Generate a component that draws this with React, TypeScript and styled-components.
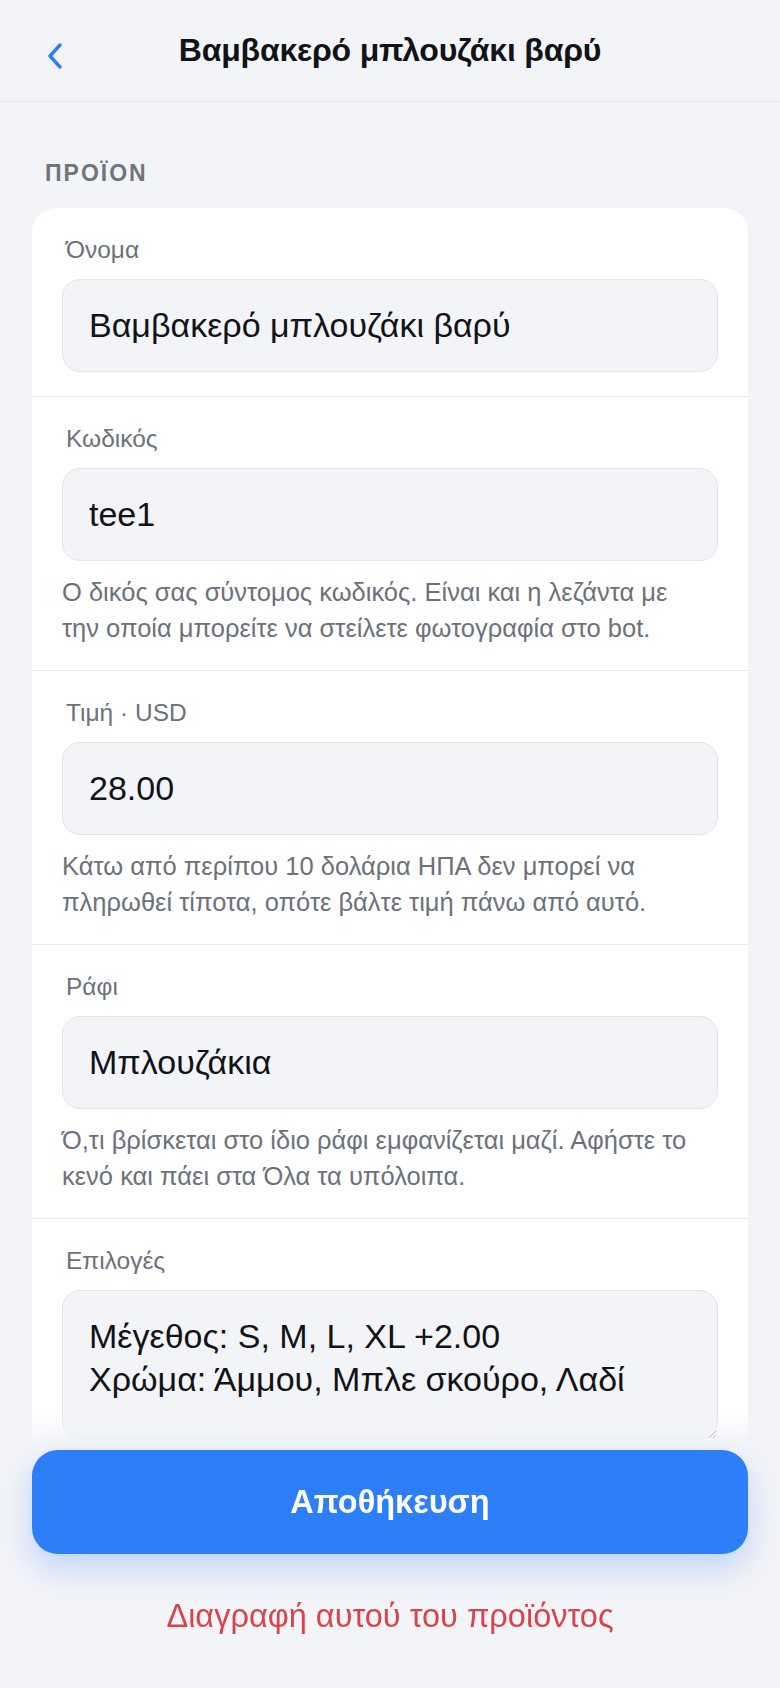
import styled, { createGlobalStyle } from "styled-components";

const GlobalStyle = createGlobalStyle`
    * {
        box-sizing: border-box;
    }

    body {
        margin: 0;
        background-color: #f3f4f8;
        font-family: "Liberation Sans", Arial, sans-serif;
        color: #111318;
    }
`;

type Field = {
    label: string;
    value: string;
    hint?: string;
    multiline?: boolean;
};

// "την\u00a0οποία" is kept together so the line breaks where it does on the device
const fields: Field[] = [
    { label: "Όνομα", value: "Βαμβακερό μπλουζάκι βαρύ" },
    {
        label: "Κωδικός",
        value: "tee1",
        hint: "Ο δικός σας σύντομος κωδικός. Είναι και η λεζάντα με την\u00a0οποία μπορείτε να στείλετε φωτογραφία στο bot.",
    },
    {
        label: "Τιμή · USD",
        value: "28.00",
        hint: "Κάτω από περίπου 10 δολάρια ΗΠΑ δεν μπορεί να πληρωθεί τίποτα, οπότε βάλτε τιμή πάνω από αυτό.",
    },
    {
        label: "Ράφι",
        value: "Μπλουζάκια",
        hint: "Ό,τι βρίσκεται στο ίδιο ράφι εμφανίζεται μαζί. Αφήστε το κενό και πάει στα Όλα τα υπόλοιπα.",
    },
    {
        label: "Επιλογές",
        value: "Μέγεθος: S, M, L, XL +2.00\nΧρώμα: Άμμου, Μπλε σκούρο, Λαδί",
        multiline: true,
    },
];

function App() {
    return (
        <>
            <GlobalStyle />
            <Header>
                <BackButton aria-label="Πίσω">
                    <svg width="18" height="26" viewBox="0 0 18 26" fill="none">
                        <polyline
                            points="14,2 4,13 14,24"
                            stroke="#2d7ff9"
                            strokeWidth="3.4"
                            strokeLinecap="round"
                            strokeLinejoin="round"
                        />
                    </svg>
                </BackButton>
                <h1>Βαμβακερό μπλουζάκι βαρύ</h1>
            </Header>

            <Main>
                <SectionTitle>ΠΡΟΪΟΝ</SectionTitle>
                <Card>
                    {fields.map((field) => (
                        <FieldRow key={field.label}>
                            <Label>{field.label}</Label>
                            {field.multiline ? (
                                <TextArea defaultValue={field.value} rows={2} />
                            ) : (
                                <Input type="text" defaultValue={field.value} />
                            )}
                            {field.hint && <Hint>{field.hint}</Hint>}
                        </FieldRow>
                    ))}
                </Card>
            </Main>

            <Footer>
                <SaveButton>Αποθήκευση</SaveButton>
                <DeleteButton>Διαγραφή αυτού του προϊόντος</DeleteButton>
            </Footer>
        </>
    );
}

const Header = styled.header`
    position: relative;
    display: flex;
    align-items: center;
    justify-content: center;
    height: 102px;
    border-bottom: 1px solid #e4e6eb;

    h1 {
        margin: 0;
        font-size: 32px;
        font-weight: 700;
        color: #111318;
        letter-spacing: -0.2px;
    }
`;

const BackButton = styled.button`
    position: absolute;
    left: 42px;
    top: 39px;
    display: flex;
    padding: 4px;
    border: none;
    background: none;
    cursor: pointer;
`;

const Main = styled.main`
    padding: 56px 32px 320px;
`;

const SectionTitle = styled.h2`
    margin: 0 0 20px 13px;
    font-size: 23px;
    font-weight: 700;
    letter-spacing: 2px;
    line-height: 30px;
    color: #70747d;
`;

const Card = styled.section`
    background-color: #ffffff;
    border-radius: 24px;
    overflow: hidden;
`;

const FieldRow = styled.div`
    display: flex;
    flex-direction: column;
    padding: 27px 30px 24px;
    border-bottom: 1px solid #e7e8ec;

    &:last-child {
        border-bottom: none;
    }
`;

const Label = styled.label`
    padding-left: 4px;
    margin-bottom: 14px;
    font-size: 24.5px;
    line-height: 30px;
    color: #6d717a;
`;

const Input = styled.input`
    height: 93px;
    padding: 0 26px;
    border: 1.5px solid #e2e4e9;
    border-radius: 18px;
    background-color: #f3f4f8;
    font-family: inherit;
    font-size: 34px;
    color: #111318;
    outline: none;
`;

const TextArea = styled.textarea`
    height: 150px;
    padding: 24px 26px;
    border: 1.5px solid #e2e4e9;
    border-radius: 18px;
    background-color: #f3f4f8;
    font-family: inherit;
    font-size: 34px;
    line-height: 43px;
    color: #111318;
    outline: none;
    resize: vertical;
`;

const Hint = styled.p`
    margin: 14px -4px 0 0;
    font-size: 25.5px;
    line-height: 35.5px;
    color: #6d717a;
`;

const Footer = styled.footer`
    position: fixed;
    left: 0;
    right: 0;
    bottom: 0;
    display: flex;
    flex-direction: column;
    align-items: center;
    padding: 40px 32px 52px;
    background: linear-gradient(
        to bottom,
        rgba(243, 244, 248, 0) 0,
        rgba(243, 244, 248, 0.9) 34px,
        #f3f4f8 40px
    );
`;

const SaveButton = styled.button`
    width: 100%;
    height: 104px;
    border: none;
    border-radius: 26px;
    background-color: #2d7ff9;
    box-shadow: 0 14px 34px rgba(45, 127, 249, 0.28);
    font-family: inherit;
    font-size: 32.5px;
    font-weight: 700;
    color: #ffffff;
    cursor: pointer;
`;

const DeleteButton = styled.button`
    margin-top: 42px;
    padding: 0;
    border: none;
    background: none;
    font-family: inherit;
    font-size: 32.5px;
    line-height: 40px;
    color: #d9434c;
    cursor: pointer;
`;

export default App;
